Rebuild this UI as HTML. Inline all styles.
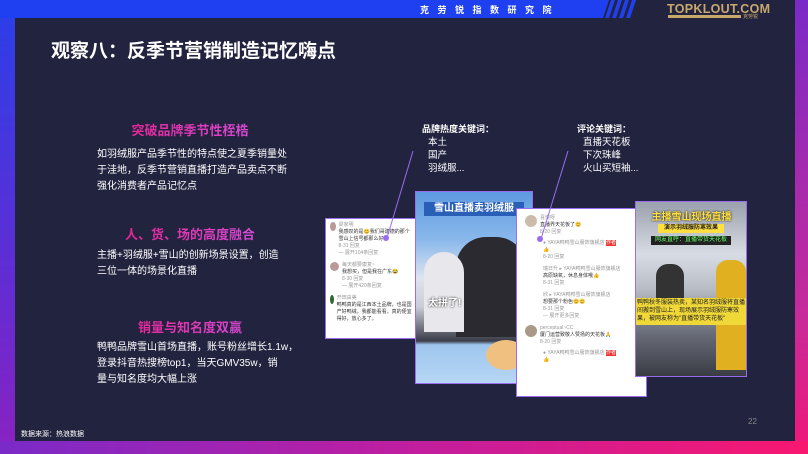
<!DOCTYPE html>
<html><head><meta charset="utf-8"><style>
*{margin:0;padding:0;box-sizing:border-box}
body{width:808px;height:454px;overflow:hidden;position:relative;background:#22233f;font-family:"Liberation Sans","Noto Sans CJK SC",sans-serif;color:#fff}
.abs{position:absolute}
.pink{background:linear-gradient(90deg,#f0157a,#c85cf0);-webkit-background-clip:text;background-clip:text;color:transparent;font-weight:bold;font-size:13px;text-align:center;width:240px;left:70px}
.body{left:97px;font-size:10px;line-height:16px;white-space:nowrap;color:#fff}
.card{position:absolute;border:1.5px solid #9a6cf0;background:#fff;overflow:hidden}
.c{font-size:5px;color:#333;line-height:7px}
.g{color:#999}
.av{width:9px;height:9px;border-radius:50%;background:#b99}
</style></head><body>
<div class="abs" style="left:0;top:0;width:15px;height:454px;background:linear-gradient(180deg,#2a3fe8,#6a2ad0 70%,#8a22c0)"></div>
<div class="abs" style="left:795px;top:0;width:13px;height:454px;background:linear-gradient(180deg,#7a2ac8,#c82a9a 70%,#f01878)"></div>
<div class="abs" style="left:0;top:441px;width:808px;height:13px;background:linear-gradient(90deg,#7a2ac8,#c01ea0 50%,#f81870)"></div>
<div class="abs" style="left:0;top:0;width:600px;height:18px;background:#1f40f0"></div>
<svg class="abs" style="left:595px;top:0" width="50" height="18"><polygon points="0,0 14,0 8,18 0,18" fill="#1f40f0"/><polygon points="16,0 20,0 14,18 10,18" fill="#1f40f0"/><polygon points="23,0 27,0 21,18 17,18" fill="#1f40f0"/><polygon points="30,0 34,0 28,18 24,18" fill="#1f40f0"/><polygon points="37,0 41,0 35,18 31,18" fill="#1f40f0"/></svg>
<div class="abs" style="left:420px;top:3px;font-size:9px;font-weight:bold;letter-spacing:8.5px">克劳锐指数研究院</div>
<div class="abs" style="left:667px;top:2px;font-size:12.5px;font-weight:bold;color:#c9a86c;letter-spacing:0.3px">TOPKLOUT.COM</div>
<div class="abs" style="left:668px;top:15px;width:73px;height:3px;background:#c9a86c"></div>
<div class="abs" style="left:743px;top:13px;font-size:5px;color:#c9a86c">克劳锐</div>
<div class="abs" style="left:51px;top:36px;font-size:19px;font-weight:bold">观察八：反季节营销制造记忆嗨点</div>
<div class="abs pink" style="top:120px">突破品牌季节性桎梏</div>
<div class="abs body" style="top:147px">如羽绒服产品季节性的特点使之夏季销量处<br>于洼地，反季节营销直播打造产品卖点不断<br>强化消费者产品记忆点</div>
<div class="abs pink" style="top:224px">人、货、场的高度融合</div>
<div class="abs body" style="top:248px">主播+羽绒服+雪山的创新场景设置，创造<br>三位一体的场景化直播</div>
<div class="abs pink" style="top:317px">销量与知名度双赢</div>
<div class="abs body" style="top:340px">鸭鸭品牌雪山首场直播，账号粉丝增长1.1w，<br>登录抖音热搜榜top1，当天GMV35w，销<br>量与知名度均大幅上涨</div>
<div class="abs" style="left:21px;top:429px;font-size:7px">数据来源：热浪数据</div>
<div class="abs" style="left:748px;top:417px;font-size:8px;color:#888">22</div>
<div class="abs" style="left:422px;top:122px;font-size:9px;font-weight:bold">品牌热度关键词：</div>
<div class="abs" style="left:428px;top:136px;font-size:9.5px;line-height:13px">本土<br>国产<br>羽绒服...</div>
<div class="abs" style="left:577px;top:122px;font-size:9px;font-weight:bold">评论关键词：</div>
<div class="abs" style="left:583px;top:136px;font-size:9.5px;line-height:13px">直播天花板<br>下次珠峰<br>火山买短袖...</div>
<div class="card" style="left:325px;top:218px;width:93px;height:121px;padding:3px 4px">
<div style="display:flex;gap:3px"><div class="av"></div><div class="c"><span class="g">梁家明</span><br>我感叹的是😊我们哥建德的那个雪山上信号都那么好。<br><span class="g">8-31 回复</span><br><span class="g">— 展开104条回复</span></div></div>
<div style="display:flex;gap:3px;margin-top:5px"><div class="av"></div><div class="c"><span class="g">每天都要康复~</span><br>我想买，但是我在广东😂<br><span class="g">8-30 回复</span><br><span class="g">— 展开420条回复</span></div></div>
<div style="display:flex;gap:3px;margin-top:5px"><div class="av" style="background:#363"></div><div class="c"><span class="g">开田由美</span><br>鸭鸭真的是江西本土品牌，也是国产好鸭绒，我都能看看，真的便宜得好，放心多了。</div></div>
</div>
<div class="card" style="left:415px;top:191px;width:118px;height:193px;background:linear-gradient(180deg,#5e9ae0 0%,#8ab8ec 25%,#dde4ee 45%,#c9ced8 60%,#3a3c48 78%,#9ec6ee 80%,#b6d6f4 100%)">
<div style="position:absolute;left:8px;top:10px;width:100px;height:14px;background:#2a5fb8;color:#fff;font-size:10px;font-weight:bold;text-align:center;line-height:14px">雪山直播卖羽绒服</div>
<div style="position:absolute;left:40px;top:45px;width:70px;height:100px;background:#2a2a30;border-radius:30px 30px 0 0"></div>
<div style="position:absolute;left:8px;top:60px;width:40px;height:80px;background:#e8e8ec;border-radius:20px 20px 0 0"></div>
<div style="position:absolute;left:12px;top:102px;font-size:10px;font-weight:bold;color:#fff;text-shadow:0 0 2px #000">太拼了!</div>
<div style="position:absolute;left:70px;top:148px;width:40px;height:30px;background:#f0c080;border-radius:50%"></div>
</div>
<div class="card" style="left:516px;top:208px;width:131px;height:189px;padding:6px 8px">
<div style="display:flex;gap:3px"><div class="av" style="width:12px;height:12px;background:#cba"></div><div class="c"><span class="g">喜慢呀</span><br>直播界天花板了😊<br><span class="g">8-20 回复</span></div></div>
<div class="c" style="margin:4px 0 0 18px"><span class="g">● YAYA鸭鸭雪山服饰旗舰店</span> <span style="background:#e33;color:#fff">作者</span><br>👍<br><span class="g">8-20 回复</span></div>
<div class="c" style="margin:5px 0 0 18px"><span class="g">瑞日升 ▸ YAYA鸭鸭雪山服饰旗舰店</span><br>高原缺氧，休息身体哦👍<br><span class="g">8-31 回复</span></div>
<div class="c" style="margin:5px 0 0 18px"><span class="g">欣 ▸ YAYA鸭鸭雪山服饰旗舰店</span><br>想要那个粉色😊😊<br><span class="g">8-31 回复</span><br><span class="g">— 展开更多回复</span></div>
<div style="display:flex;gap:3px;margin-top:5px"><div class="av" style="width:12px;height:12px;background:#a98"></div><div class="c"><span class="g">perceptual~CC</span><br>厦门运营致敬人赞扬的天花板🙏<br><span class="g">8-20 回复</span></div></div>
<div class="c" style="margin:4px 0 0 18px"><span class="g">● YAYA鸭鸭雪山服饰旗舰店</span> <span style="background:#e33;color:#fff">作者</span><br>👍</div>
</div>
<div class="card" style="left:635px;top:201px;width:112px;height:176px;background:linear-gradient(180deg,#9aa0ac 0%,#d8dce4 30%,#b8bcc4 50%,#6a6e7a 75%,#3a3c44 100%)">
<div style="position:absolute;left:3px;top:6px;width:105px;font-size:10px;font-weight:bold;color:#ffe040;text-shadow:0 0 2px #000;text-align:center">主播雪山现场直播</div>
<div style="position:absolute;left:22px;top:22px;width:66px;height:9px;background:#ffe040;color:#222;font-size:6px;text-align:center;font-weight:bold;line-height:9px">演示羽绒服防寒效果</div>
<div style="position:absolute;left:15px;top:34px;width:80px;height:9px;background:#222;color:#6f6;font-size:6px;text-align:center;line-height:9px">网友直呼：直播带货天花板</div>
<div style="position:absolute;left:80px;top:58px;width:30px;height:110px;background:#e0b020;border-radius:12px 12px 0 0"></div>
<div style="position:absolute;left:20px;top:62px;width:28px;height:60px;background:#333;border-radius:12px 12px 0 0"></div>
<div style="position:absolute;left:0;top:96px;width:110px;height:27px;background:#f0d838;color:#222;font-size:6px;line-height:8px;padding:1px">鸭鸭秋冬服装热卖，某知名羽绒服将直播间搬到雪山上，现场展示羽绒服防寒效果，被网友称为"直播带货天花板"</div>
</div>
<svg class="abs" style="left:0;top:0" width="808" height="454"><line x1="413" y1="151" x2="387" y2="238" stroke="#9a6cf0" stroke-width="1"/><circle cx="386" cy="238" r="3" fill="#9a6cf0"/><line x1="568" y1="151" x2="541" y2="239" stroke="#9a6cf0" stroke-width="1"/><circle cx="540" cy="239" r="3" fill="#9a6cf0"/></svg>
</body></html>
